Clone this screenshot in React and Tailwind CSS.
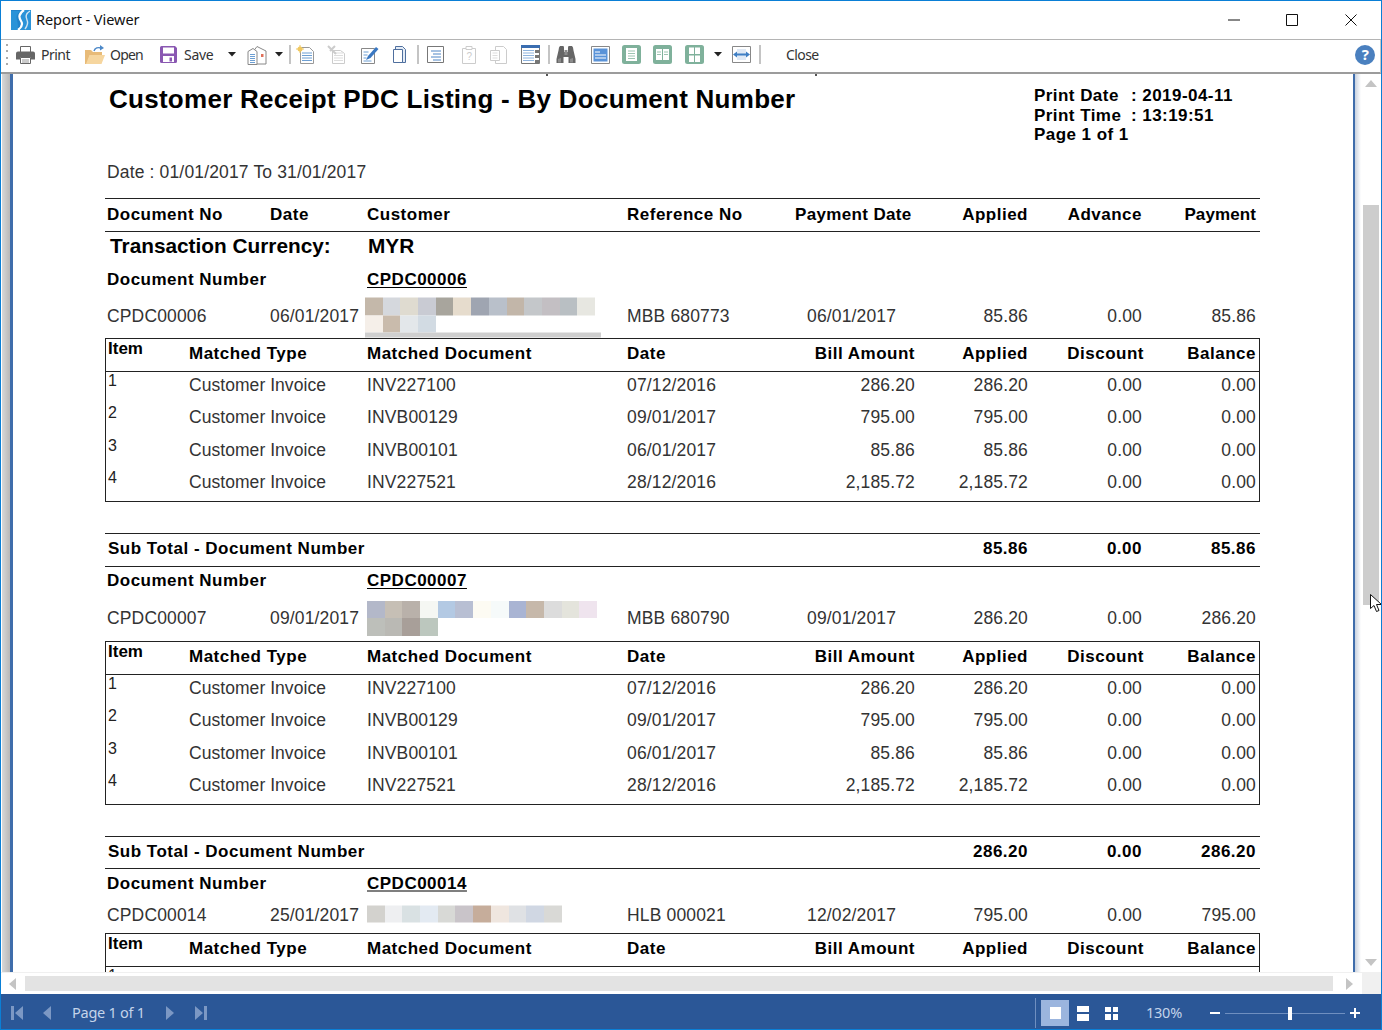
import React from "react";

const arial = "font-['Liberation_Sans',Arial,sans-serif]";
const ui = "font-['Noto_Sans','Open_Sans',sans-serif]";

const Caret = ({ className = "" }) => (
  <svg width="8" height="5" viewBox="0 0 8 5" className={className}><path d="M0 0h8L4 4.500z" fill="#222" /></svg>
);

const PrintIcon = () => (
  <svg width="21" height="20" viewBox="0 0 21 20">
    <path d="M5.500 1.500h10v6h-10z" fill="#fff" stroke="#666" />
    <path d="M3 6.500h15a2 2 0 0 1 2 2v6h-4v-2H5v2H1v-6a2 2 0 0 1 2-2z" fill="#666" />
    <path d="M5.500 12.500h10v6h-10z" fill="#fff" stroke="#666" />
    <path d="M7 15h7M7 17h7" stroke="#999" />
  </svg>
);
const OpenIcon = () => (
  <svg width="22" height="20" viewBox="0 0 22 20">
    <path d="M1 5h6l2 2h9v3H6l-3 9H1z" fill="#e8bb78" />
    <path d="M5.500 10H21l-3.500 9H2z" fill="#f6d69f" />
    <path d="M10 6c1-3 4-4 7-3" fill="none" stroke="#4c88c8" strokeWidth="1.400" />
    <path d="M16 0l4 3-4 2.500z" fill="#4c88c8" />
  </svg>
);
const SaveIcon = () => (
  <svg width="19" height="19" viewBox="0 0 19 19">
    <path d="M1 2.500a1.500 1.500 0 0 1 1.500-1.500H16l2 2v13.500a1.500 1.500 0 0 1-1.500 1.500h-14A1.500 1.500 0 0 1 1 16.500z" fill="#8a58b2" />
    <path d="M4 2.500h11v6H4z" fill="#fff" />
    <path d="M4 11h11v6H4z" fill="#fff" />
    <path d="M10.500 12.500h2.500v4h-2.500z" fill="#8a58b2" />
  </svg>
);
const HouseIcon = () => (
  <svg width="20" height="20" viewBox="0 0 20 20">
    <path d="M5 8l5-6.500L19 6v13H10" fill="#fff" stroke="#888" />
    <path d="M1 6.500l5-3 4 3v13H1z" fill="#fff" stroke="#888" />
    <path d="M3 9.500h5M3 11.500h5M3 13.500h5M3 15.500h5M3 17.500h5" stroke="#6d9fd3" />
    <rect x="14" y="9" width="2.500" height="3" fill="#e0705a" />
  </svg>
);
const DocLines = ({ stroke = "#6d9fd3", x1 = 6, x2 = 15 }) => (
  <path d={`M${x1} 8h${x2 - x1}M${x1} 10.500h${x2 - x1}M${x1} 13h${x2 - x1}M${x1} 15.500h${x2 - x1}`} stroke={stroke} />
);
const NewDoc = () => (
  <svg width="19" height="19" viewBox="0 0 19 19">
    <path d="M4.500 2.500h9l4 4v12h-13z" fill="#fff" stroke="#999" />
    <DocLines x1={6} x2={16} />
    <circle cx="4" cy="4" r="2.500" fill="#f0c860" />
    <path d="M4 0v8M0 4h8" stroke="#f0c860" />
  </svg>
);
const CutDoc = () => (
  <svg width="19" height="19" viewBox="0 0 19 19">
    <path d="M5.500 5.500h8l4 3v10h-12z" fill="#fff" stroke="#ccc" />
    <DocLines stroke="#ddd" x1={7} x2={16} />
    <path d="M1 1l8 8M8 1L3 6" stroke="#ccc" strokeWidth="2" />
  </svg>
);
const EditDoc = () => (
  <svg width="19" height="19" viewBox="0 0 19 19">
    <path d="M1.500 3.500h13v15h-13z" fill="#fff" stroke="#888" />
    <path d="M3.500 7h5M3.500 10h4M3.500 13h3M3.500 16h8" stroke="#6d9fd3" />
    <path d="M6 15l2-4 8-9 2.500 2-8 9z" fill="#3a78c2" />
  </svg>
);
const PagesIcon = () => (
  <svg width="15" height="19" viewBox="0 0 15 19">
    <path d="M3.500 1.500h7l3 3v13h-10z" fill="#e4ecf6" stroke="#4f6f9e" />
    <path d="M1.500 4.500h9v13h-9z" fill="#fff" stroke="#4f6f9e" />
  </svg>
);
const ListBox = () => (
  <svg width="18" height="18" viewBox="0 0 18 18">
    <path d="M.500.500h16v16H.500z" fill="#fff" stroke="#777" />
    <path d="M4 5h10M6 8h8M4 11h10M6 14h8" stroke="#4f86c6" />
  </svg>
);
const QDoc = () => (
  <svg width="16" height="20" viewBox="0 0 16 20">
    <path d="M1.500 3.500h13v15h-13z" fill="#fff" stroke="#ccc" />
    <path d="M5 1.500h6v3H5z" fill="#fff" stroke="#ccc" />
    <text x="8" y="15" textAnchor="middle" fontSize="10" fill="#ccc" fontFamily="Liberation Sans">?</text>
  </svg>
);
const CopyDoc = () => (
  <svg width="19" height="20" viewBox="0 0 19 20">
    <path d="M6.500 1.500h8l3 3v14h-11z" fill="#fff" stroke="#ccc" />
    <path d="M1.500 5.500h9v10h-9z" fill="#fff" stroke="#ccc" />
    <path d="M3.500 8h5M3.500 10.500h5M3.500 13h5" stroke="#ddd" />
  </svg>
);
const TableIcon = () => (
  <svg width="19" height="19" viewBox="0 0 19 19">
    <path d="M.500.500h18v18H.500z" fill="#fff" stroke="#777" />
    <path d="M0 0h19v3H0z" fill="#3a6db0" />
    <path d="M2 5.500h11M2 8h11M2 10.500h11M2 13h11M2 15.500h11" stroke="#8fb4de" />
    <path d="M14 5h4v3h-4zM14 10h4v3h-4zM14 15h4v3h-4z" fill="#777" />
  </svg>
);
const Binoculars = () => (
  <svg width="20" height="19" viewBox="0 0 20 19">
    <path d="M3 2.500L4 1h3.500l.5 1.500V7h4V2.500L12.500 1H16l1 1.500.500 3 2 8.500v4h-7v-6H7.500v6h-7v-4l2-8.500z" fill="#666" />
    <path d="M2 14v3.500h3V13zM14 14v3.500h3V13z" fill="#8c8c8c" />
    <rect x="8.500" y="5" width="3" height="5" fill="#8c8c8c" />
  </svg>
);
const BlueBox = () => (
  <svg width="19" height="18" viewBox="0 0 19 18">
    <path d="M.500.500h18v17H.500z" fill="#fff" stroke="#888" />
    <rect x="2.500" y="2.500" width="14" height="13" fill="#5a93d8" />
    <path d="M4 6h5M4 9h11M4 12h11" stroke="#fff" />
  </svg>
);
const GreenBox = ({ children }) => (
  <svg width="19" height="19" viewBox="0 0 19 19">
    <rect width="19" height="19" rx="2.500" fill="#7fb19b" />
    {children}
  </svg>
);
const FitIcon = () => (
  <svg width="19" height="17" viewBox="0 0 19 17">
    <path d="M.500.500h18v16H.500z" fill="#fff" stroke="#888" />
    <rect x="5" y="3" width="9" height="11" fill="#dfe9f5" />
    <path d="M1 8.500l4-3v2h9v-2l4 3-4 3v-2H5v2z" fill="#3f7fc4" />
  </svg>
);

const Sep = ({ className }) => <div className={`w-[2px] h-[19px] bg-[#c4c4c4] shrink-0 ${className}`} />;

const Toolbar = () => (
  <div className={`h-[35px] pb-[3px] shrink-0 border-t border-t-[#b4b4b4] border-b-2 border-b-[#9c9c9c] border-r border-r-[#c8c8c8] bg-white flex items-center text-[14px] text-[#333] tracking-[-0.5px] relative ${ui}`}>
    <div className="ml-[5px] w-[2px] h-[22px] shrink-0 flex flex-col justify-between">
      <div className="h-[2px] bg-[#aaa]" /><div className="h-[2px] bg-[#aaa]" /><div className="h-[2px] bg-[#aaa]" /><div className="h-[2px] bg-[#aaa]" />
    </div>
    <div className="ml-[7px] flex shrink-0"><PrintIcon /></div>
    <span className="ml-[5px] w-[30px] shrink-0">Print</span>
    <div className="ml-[13px] flex shrink-0"><OpenIcon /></div>
    <span className="ml-[4px] w-[34px] shrink-0 tracking-[-0.8px]">Open</span>
    <div className="ml-[15px] flex shrink-0"><SaveIcon /></div>
    <span className="ml-[6px] w-[31px] shrink-0 tracking-[-0.3px]">Save</span>
    <Caret className="ml-[13px] shrink-0" />
    <div className="ml-[11px] flex shrink-0"><HouseIcon /></div>
    <Caret className="ml-[8px] shrink-0" />
    <Sep className="ml-[6px]" />
    <div className="ml-[5px] flex shrink-0"><NewDoc /></div>
    <div className="ml-[12px] flex shrink-0"><CutDoc /></div>
    <div className="ml-[14px] flex shrink-0"><EditDoc /></div>
    <div className="ml-[13px] flex shrink-0"><PagesIcon /></div>
    <Sep className="ml-[10px]" />
    <div className="ml-[8px] flex shrink-0"><ListBox /></div>
    <div className="ml-[16px] flex shrink-0"><QDoc /></div>
    <div className="ml-[12px] flex shrink-0"><CopyDoc /></div>
    <div className="ml-[13px] flex shrink-0"><TableIcon /></div>
    <Sep className="ml-[8px]" />
    <div className="ml-[6px] flex shrink-0"><Binoculars /></div>
    <div className="ml-[15px] flex shrink-0"><BlueBox /></div>
    <div className="ml-[12px] flex shrink-0">
      <GreenBox><rect x="4" y="3" width="11" height="13" fill="#fff" /><path d="M6 6h7M6 8.500h7M6 11h7M6 13.500h7" stroke="#9cc4b1" /></GreenBox>
    </div>
    <div className="ml-[12px] flex shrink-0">
      <GreenBox><rect x="3" y="4" width="6" height="11" fill="#fff" /><rect x="10" y="4" width="6" height="11" fill="#fff" /><path d="M4 7h4M4 9.500h4M11 7h4M11 9.500h4" stroke="#9cc4b1" /></GreenBox>
    </div>
    <div className="ml-[13px] flex shrink-0">
      <GreenBox><rect x="4" y="2.500" width="5" height="6.500" fill="#fff" /><rect x="10" y="2.500" width="5" height="6.500" fill="#fff" /><rect x="4" y="10.500" width="5" height="6.500" fill="#fff" /><rect x="10" y="10.500" width="5" height="6.500" fill="#fff" /></GreenBox>
    </div>
    <Caret className="ml-[10px] shrink-0" />
    <div className="ml-[10px] flex shrink-0"><FitIcon /></div>
    <Sep className="ml-[8px]" />
    <span className="ml-[25px] w-[36px] shrink-0 tracking-[-0.6px]">Close</span>
    <div className="ml-auto mr-[5px] w-[20px] h-[20px] rounded-full bg-[#4a80bf] text-white flex items-center justify-center text-[15px] font-bold">?</div>
  </div>
);

const cellH = "grid grid-cols-[165px_97px_260px_168px_116px_117px_114px_114px_4px] items-center";
const innerT = "grid grid-cols-[83px_178px_260px_288px_113px_116px_112px_3px] items-center";
const bold = "font-bold text-black text-[17px] tracking-[0.5px]";
const reg = "text-[17.5px] text-[#333] tracking-[0.15px]";

const Mosaic = ({ rows, bar }) => (
  <div className="flex flex-col w-[240px]">
    {rows.map((r, i) => (
      <div key={i} className="flex h-[17.5px]">
        {r.map((c, j) => <div key={j} className={`w-[17.7px] h-full shrink-0 ${c}`} />)}
      </div>
    ))}
    {bar && <div className="h-[5px] w-[236px] bg-[#cfcfcf]" />}
  </div>
);

const tiles1 = [
  ["bg-[#c4b8aa]","bg-[#d5d8dd]","bg-[#dfdbd0]","bg-[#c9cbd3]","bg-[#a8a59d]","bg-[#e6dccd]","bg-[#9fa5b1]","bg-[#b9c0ca]","bg-[#c2b6a9]","bg-[#c4c7ca]","bg-[#c3bfc3]","bg-[#b9bfc3]","bg-[#e7e7e1]"],
  ["bg-[#f5efe9]","bg-[#c9bbac]","bg-[#e3e7ea]","bg-[#d2dbe3]"],
];
const tiles2 = [
  ["bg-[#b3b8c9]","bg-[#c6bfb5]","bg-[#b9b1aa]","bg-[#f5f7f3]","bg-[#b3c9e3]","bg-[#b8bfd3]","bg-[#fdfbf3]","bg-[#f6fafa]","bg-[#a9b4d3]","bg-[#c6b8aa]","bg-[#dcdcdc]","bg-[#e4e4dc]","bg-[#efe4ee]"],
  ["bg-[#bdbfba]","bg-[#bab9b4]","bg-[#a89f99]","bg-[#bcc7be]"],
];
const tiles3 = [
  ["bg-[#d3d2ce]","bg-[#eeeff1]","bg-[#d9e1e3]","bg-[#e3eaf2]","bg-[#d8d9d6]","bg-[#c9c4c9]","bg-[#c6ad9b]","bg-[#efe6df]","bg-[#dfe1e4]","bg-[#d0d7e3]","bg-[#d9d9d6]"],
];

const DocHead = ({ id, h, y }) => (
  <div className={`${cellH} ${bold} ${h} ${y}`}>
    <span className="pl-[2px] col-span-2">Document Number</span>
    <span className="underline underline-offset-2">{id}</span>
  </div>
);

const DataRow = ({ doc, date, ref2, pay, a, b, c, tiles, bar, h, shift, y }) => (
  <div className={`${cellH} ${reg} ${h} ${y}`}>
    <span className="pl-[2px]">{doc}</span>
    <span>{date}</span>
    <div className={shift}><Mosaic rows={tiles} bar={bar} /></div>
    <span>{ref2}</span>
    <span className="pl-[12px]">{pay}</span>
    <span className="text-right">{a}</span>
    <span className="text-right">{b}</span>
    <span className="text-right">{c}</span>
  </div>
);

const DetailHead = () => (
  <div className={`grid grid-cols-[83px_178px_260px_188px_100px_113px_116px_112px_3px] items-center ${bold} h-[33px] border-b border-b-[#222] [&>*]:-translate-y-[1px]`}>
    <span className="pl-[2px] self-start -mt-[2px] tracking-normal text-[17px]">Item</span>
    <span>Matched Type</span>
    <span>Matched Document</span>
    <span>Date</span>
    <span className="whitespace-nowrap flex justify-end">Bill Amount</span>
    <span className="text-right">Applied</span>
    <span className="text-right">Discount</span>
    <span className="text-right">Balance</span>
  </div>
);

const lines = [
  ["1", "INV227100", "07/12/2016", "286.20"],
  ["2", "INVB00129", "09/01/2017", "795.00"],
  ["3", "INVB00101", "06/01/2017", "85.86"],
  ["4", "INV227521", "28/12/2016", "2,185.72"],
];

const DetailTable = () => (
  <div className="border border-[#222] h-[164px] overflow-hidden">
    <DetailHead />
    {lines.map(([n, inv, d, amt]) => (
      <div key={n} className={`${innerT} ${reg} h-[32.4px] [&>*]:-translate-y-[3px]`}>
        <span className="pl-[2px] self-start text-[16px] text-[#222]">{n}</span>
        <span className="tracking-[0.05px]">Customer Invoice</span>
        <span>{inv}</span>
        <span className="grid grid-cols-[188px_100px]"><span>{d}</span><span className="text-right">{amt}</span></span>
        <span className="text-right">{amt}</span>
        <span className="text-right pr-[2px]">0.00</span>
        <span className="text-right">0.00</span>
      </div>
    ))}
  </div>
);

const SubTotal = ({ a, b, c, h }) => (
  <div className={`${cellH} ${bold} ${h} border-y border-y-[#222] mt-[31px] [&>*]:-translate-y-[1px]`}>
    <span className="pl-[3px] col-span-5">Sub Total - Document Number</span>
    <span className="text-right">{a}</span>
    <span className="text-right">{b}</span>
    <span className="text-right">{c}</span>
  </div>
);

const Report = () => (
  <div className={`w-[1155px] ml-[92px] shrink-0 ${arial}`}>
    <div className="h-[124px] flex justify-between">
      <div>
        <div className="pl-[4px] mt-[7px] h-[36px] leading-[36px] font-bold text-[26px] text-black tracking-[0.27px] whitespace-nowrap">Customer Receipt PDC Listing - By Document Number</div>
        <div className={`pl-[2px] mt-[42px] ${reg}`}>Date : 01/01/2017 To 31/01/2017</div>
      </div>
      <div className={`w-[226px] mt-[12px] ${bold} leading-[19.5px] tracking-[0.45px]`}>
        <div className="flex"><span className="w-[97px]">Print Date</span><span>: 2019-04-11</span></div>
        <div className="flex"><span className="w-[97px]">Print Time</span><span>: 13:19:51</span></div>
        <div>Page 1 of 1</div>
      </div>
    </div>
    <div className={`${cellH} ${bold} h-[34px] border-y border-y-[#222]`}>
      <span className="pl-[2px]">Document No</span>
      <span>Date</span>
      <span>Customer</span>
      <span>Reference No</span>
      <span className="whitespace-nowrap tracking-[0.35px]">Payment Date</span>
      <span className="text-right">Applied</span>
      <span className="text-right">Advance</span>
      <span className="text-right tracking-[0.1px]">Payment</span>
    </div>
    <div className="h-[31px] pb-[4px] flex items-center font-bold text-[20.8px] text-black">
      <span className="pl-[5px] w-[263px]">Transaction Currency:</span><span>MYR</span>
    </div>

    <DocHead id="CPDC00006" h="h-[34px]" y="" />
    <DataRow doc="CPDC00006" date="06/01/2017" ref2="MBB 680773" pay="06/01/2017" a="85.86" b="0.00" c="85.86" tiles={tiles1} bar h="h-[41px]" y="[&>*]:-translate-y-[3.5px]" shift="-ml-[2px] pt-[4px]" />
    <DetailTable />

    <SubTotal h="h-[34px]" a="85.86" b="0.00" c="85.86" />
    <DocHead id="CPDC00007" h="h-[32px]" y="[&>*]:-translate-y-[2px]" />
    <DataRow doc="CPDC00007" date="09/01/2017" ref2="MBB 680790" pay="09/01/2017" a="286.20" b="0.00" c="286.20" tiles={tiles2} h="h-[42px]" y="[&>*]:-translate-y-[2px]" />
    <DetailTable />

    <SubTotal h="h-[33px]" a="286.20" b="0.00" c="286.20" />
    <DocHead id="CPDC00014" h="h-[31px]" y="[&>*]:-translate-y-[1.5px]" />
    <DataRow doc="CPDC00014" date="25/01/2017" ref2="HLB 000021" pay="12/02/2017" a="795.00" b="0.00" c="795.00" tiles={tiles3} h="h-[33px]" y="[&>*]:-translate-y-[1.5px]" shift="pb-[2px]" />
    <DetailTable />
  </div>
);

const Arrow = ({ d }) => (
  <svg width="12" height="8" viewBox="0 0 12 8"><path d={d} fill="#c4c4c4" /></svg>
);

export default function App() {
  return (
    <div className="w-[1382px] h-[1030px] flex flex-col border border-[#0a7fd6] bg-white overflow-hidden relative">
      <div className={`h-[38px] shrink-0 flex items-center bg-white ${ui}`}>
        <svg width="20" height="20" viewBox="0 0 20 20" className="ml-[10px] shrink-0">
          <rect width="20" height="20" fill="#2b93d8" />
          <path d="M0 0h10v20H6C9 14 4 9 6 5 7 3 8 2 10 1H0z" fill="#1a74bd" opacity="0.5" />
          <path d="M13 0c-6 4-5 8-3 11s1 6-3 9" fill="none" stroke="#fff" strokeWidth="2.200" />
          <path d="M19 1c-5 3-4 7-3 9s1 5-2 9" fill="none" stroke="#cfe3f2" strokeWidth="1.400" />
        </svg>
        <span className="ml-[5px] text-[14.5px] text-[#111] tracking-[-0.05px]">Report - Viewer</span>
        <svg width="12" height="2" viewBox="0 0 12 2" className="ml-auto shrink-0"><path d="M0 1h12" stroke="#111" /></svg>
        <svg width="12" height="12" viewBox="0 0 12 12" className="ml-[46px] shrink-0"><path d="M.500.500h11v11H.500z" fill="none" stroke="#111" /></svg>
        <svg width="12" height="12" viewBox="0 0 12 12" className="ml-[47px] mr-[24px] shrink-0"><path d="M.500.500l11 11M11.500.500l-11 11" stroke="#111" /></svg>
      </div>
      <Toolbar />
      <div className="h-[898px] shrink-0 flex overflow-hidden relative">
        <div className="w-[8px] shrink-0 ml-[1px] bg-gradient-to-r from-[#d8d8d8] to-[#b8b8b8]" />
        <div className="w-[3px] shrink-0 bg-[#3f6dab]" />
        <div className="w-[1340px] shrink-0 bg-white flex relative">
          <Report />
        </div>
        <div className="w-[2px] shrink-0 bg-[#3f6dab]" />
        <div className="w-[6px] shrink-0 bg-gradient-to-r from-[#c9d2df] to-white" />
        <div className="w-[19px] shrink-0 bg-white flex flex-col items-center">
          <div className="mt-[6px] h-[8px] flex"><Arrow d="M6 0l6 7H0z" /></div>
          <div className="mt-[117px] w-[16px] h-[400px] bg-[#cdcdcd]" />
          <div className="mt-auto mb-[5px] h-[8px] flex"><Arrow d="M0 0h12L6 7z" /></div>
        </div>
      </div>
      <div className="h-[22px] shrink-0 flex items-center bg-white border-t border-t-[#f0f0f0]">
        <svg width="7" height="12" viewBox="0 0 7 12" className="ml-[8px] shrink-0"><path d="M7 0v12L0 6z" fill="#c4c4c4" /></svg>
        <div className="ml-[9px] w-[1308px] h-[15px] bg-[#e3e3e3] shrink-0" />
        <svg width="7" height="12" viewBox="0 0 7 12" className="ml-[13px] shrink-0"><path d="M0 0v12l7-6z" fill="#c4c4c4" /></svg>
        <div className="ml-auto w-[19px] h-full bg-[#f0f0f0]" />
      </div>
      <div className={`flex-1 pt-[3px] bg-[#2b5797] flex items-center text-[14.5px] text-[#c4d4ea] tracking-[-0.25px] ${ui}`}>
        <svg width="12" height="14" viewBox="0 0 12 14" className="ml-[10px] shrink-0"><path d="M0 0h3v14H0zM12 0v14L4 7z" fill="#7c98c4" /></svg>
        <svg width="8" height="14" viewBox="0 0 8 14" className="ml-[20px] shrink-0"><path d="M8 0v14L0 7z" fill="#7c98c4" /></svg>
        <span className="ml-[21px] w-[75px] shrink-0 whitespace-nowrap">Page 1 of 1</span>
        <svg width="8" height="14" viewBox="0 0 8 14" className="ml-[19px] shrink-0"><path d="M0 0v14l8-7z" fill="#7c98c4" /></svg>
        <svg width="12" height="14" viewBox="0 0 12 14" className="ml-[21px] shrink-0"><path d="M12 0H9v14h3zM0 0v14l8-7z" fill="#7c98c4" /></svg>
        <div className="ml-[828px] w-px h-[30px] bg-[#6f8fc0] shrink-0" />
        <div className="ml-[5px] w-[28px] h-[26px] bg-[#9bb5de] flex items-center justify-center shrink-0"><div className="w-[11px] h-[12px] bg-white" /></div>
        <div className="ml-[8px] w-[12px] h-[15px] flex flex-col justify-between shrink-0"><div className="h-[6px] bg-white" /><div className="h-[7px] bg-white" /></div>
        <div className="ml-[16px] w-[13px] h-[13px] grid grid-cols-2 gap-[2px] shrink-0"><div className="bg-white" /><div className="bg-white" /><div className="bg-white" /><div className="bg-white" /></div>
        <span className="ml-[28px] w-[38px] shrink-0">130%</span>
        <div className="ml-[26px] w-[10px] h-[2px] bg-white shrink-0" />
        <div className="ml-[5px] w-[120px] h-px bg-[#6f8fc0] shrink-0 relative">
          <div className="w-[4px] h-[13px] bg-white absolute left-[63px] -top-[6px]" />
        </div>
        <svg width="10" height="10" viewBox="0 0 10 10" className="ml-[5px] shrink-0"><path d="M0 5h10M5 0v10" stroke="#fff" strokeWidth="2" /></svg>
      </div>
      <svg width="12" height="19" viewBox="0 0 12 19" className="absolute left-[1369px] top-[593px]">
        <path d="M.500.500v14l3.500-3 2.500 6 2.500-1-2.500-6h5z" fill="#fff" stroke="#111" />
      </svg>
      <div className="absolute left-[545px] top-[73px] w-[2px] h-[2px] bg-[#555]" />
      <div className="absolute left-[814px] top-[73px] w-[2px] h-[2px] bg-[#555]" />
    </div>
  );
}
